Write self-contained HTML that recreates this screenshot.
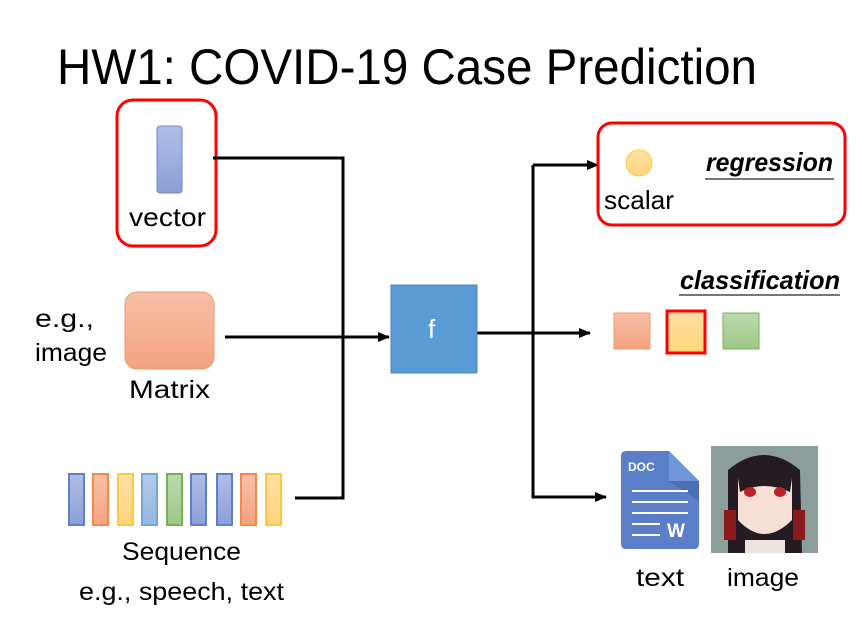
<!DOCTYPE html>
<html><head><meta charset="utf-8"><style>
html,body{margin:0;padding:0;background:#fff;width:866px;height:621px;overflow:hidden}
svg{display:block}
text{font-family:"Liberation Sans",sans-serif;fill:#000}
</style></head><body>
<svg width="866" height="621" viewBox="0 0 866 621" xmlns="http://www.w3.org/2000/svg">
<defs>
<linearGradient id="gb" x1="0" y1="0" x2="0" y2="1"><stop offset="0" stop-color="#b0bde6"/><stop offset="1" stop-color="#8b9fd8"/></linearGradient>
<linearGradient id="go" x1="0" y1="0" x2="0" y2="1"><stop offset="0" stop-color="#f6c0a8"/><stop offset="1" stop-color="#f4a280"/></linearGradient>
<linearGradient id="gy" x1="0" y1="0" x2="0" y2="1"><stop offset="0" stop-color="#ffe0a6"/><stop offset="1" stop-color="#ffd47a"/></linearGradient>
<linearGradient id="gl" x1="0" y1="0" x2="0" y2="1"><stop offset="0" stop-color="#b4cbea"/><stop offset="1" stop-color="#95b7e2"/></linearGradient>
<linearGradient id="gg" x1="0" y1="0" x2="0" y2="1"><stop offset="0" stop-color="#bcd9ae"/><stop offset="1" stop-color="#9cc886"/></linearGradient>
<marker id="ar" markerWidth="12" markerHeight="12" refX="11" refY="6" orient="auto" markerUnits="userSpaceOnUse"><path d="M0,1 L12,6 L0,11 z" fill="#000"/></marker>
</defs>
<text x="57" y="84" font-size="50" textLength="700" lengthAdjust="spacingAndGlyphs">HW1: COVID-19 Case Prediction</text>

<rect x="117" y="100" width="99" height="146" rx="16" fill="none" stroke="#f00" stroke-width="3"/>
<rect x="157" y="126" width="25" height="67" rx="3" fill="url(#gb)" stroke="#6f86cf" stroke-width="1"/>
<text x="129" y="226" font-size="26" textLength="77" lengthAdjust="spacingAndGlyphs">vector</text>

<rect x="125" y="292" width="89" height="77" rx="12" fill="url(#go)" stroke="#ee9a6c" stroke-width="1"/>
<text x="35" y="327" font-size="25" textLength="59" lengthAdjust="spacingAndGlyphs">e.g.,</text>
<text x="35" y="361" font-size="25" textLength="72" lengthAdjust="spacingAndGlyphs">image</text>
<text x="129" y="398" font-size="25" textLength="81" lengthAdjust="spacingAndGlyphs">Matrix</text>

<g stroke-width="2">
<rect x="69" y="474" width="15" height="51" fill="url(#gb)" stroke="#5f7fcc"/>
<rect x="93" y="474" width="15" height="51" fill="url(#go)" stroke="#f08a4e"/>
<rect x="118" y="474" width="15" height="51" fill="url(#gy)" stroke="#ffc73a"/>
<rect x="142" y="474" width="15" height="51" fill="url(#gl)" stroke="#74a4dc"/>
<rect x="167" y="474" width="15" height="51" fill="url(#gg)" stroke="#77b156"/>
<rect x="191" y="474" width="15" height="51" fill="url(#gb)" stroke="#5f7fcc"/>
<rect x="217" y="474" width="15" height="51" fill="url(#gb)" stroke="#5f7fcc"/>
<rect x="241" y="474" width="15" height="51" fill="url(#go)" stroke="#f08a4e"/>
<rect x="266" y="474" width="15" height="51" fill="url(#gy)" stroke="#ffc73a"/>
</g>
<text x="122" y="560" font-size="25" textLength="119" lengthAdjust="spacingAndGlyphs">Sequence</text>
<text x="79" y="600" font-size="25" textLength="205" lengthAdjust="spacingAndGlyphs">e.g., speech, text</text>

<g stroke="#000" stroke-width="3" fill="none">
<path d="M213,158 H343 V498 H295"/>
<path d="M225,337 H389" marker-end="url(#ar)"/>
<path d="M477,333 H590" marker-end="url(#ar)"/>
<path d="M533,165 V497 H606" marker-end="url(#ar)"/>
<path d="M533,165 H598" marker-end="url(#ar)"/>
</g>

<rect x="391" y="285" width="86" height="88" fill="#5b9bd5" stroke="#4a86bf" stroke-width="1"/>
<text x="428" y="338" font-size="26" style="fill:#fff">f</text>

<rect x="598" y="123" width="247" height="102" rx="14" fill="none" stroke="#f00" stroke-width="3"/>
<circle cx="639" cy="163" r="13" fill="url(#gy)" stroke="#ffc73a" stroke-width="1"/>
<text x="604" y="209" font-size="26" textLength="70" lengthAdjust="spacingAndGlyphs">scalar</text>
<text x="706" y="171" font-size="26" font-weight="bold" font-style="italic" textLength="127" lengthAdjust="spacingAndGlyphs">regression</text>
<line x1="705" y1="179" x2="834" y2="179" stroke="#777" stroke-width="2"/>

<text x="680" y="289" font-size="26" font-weight="bold" font-style="italic" textLength="160" lengthAdjust="spacingAndGlyphs">classification</text>
<line x1="679" y1="295" x2="840" y2="295" stroke="#777" stroke-width="2"/>
<rect x="614" y="313" width="36" height="36" fill="url(#go)" stroke="#ee9a6c" stroke-width="1"/>
<rect x="667" y="311" width="38" height="42" fill="url(#gy)" stroke="#f00" stroke-width="3"/>
<rect x="723" y="313" width="36" height="36" fill="url(#gg)" stroke="#77b156" stroke-width="1"/>

<path d="M624,451 H669 L699,481 V544 Q699,549 694,549 H626 Q621,549 621,544 V456 Q621,451 626,451 Z" fill="#5b7ec9"/>
<path d="M669,451 L699,481 H669 Z" fill="#6f97d9"/>
<path d="M669,481 H699 V501 Z" fill="#4d6db5"/>
<text x="628" y="471" font-size="12" font-weight="bold" style="fill:#fff">DOC</text>
<g stroke="#fff" stroke-width="2"><line x1="632" y1="491" x2="688" y2="491"/><line x1="632" y1="502" x2="688" y2="502"/><line x1="632" y1="513" x2="688" y2="513"/><line x1="632" y1="524" x2="660" y2="524"/><line x1="632" y1="535" x2="660" y2="535"/></g>
<text x="667" y="537" font-size="19" font-weight="bold" style="fill:#fff">W</text>
<text x="636" y="586" font-size="25" textLength="48" lengthAdjust="spacingAndGlyphs">text</text>

<rect x="711" y="446" width="107" height="107" fill="#9fb3b0"/>
<rect x="711" y="446" width="107" height="107" fill="#6e7f80" opacity="0.4"/>
<path d="M728,470 Q764,440 800,470 L802,553 H728 Z" fill="#241c22"/>
<path d="M738,478 Q764,468 792,478 L792,520 Q764,548 738,520 Z" fill="#f6e0d6"/>
<path d="M738,478 Q764,458 792,478 L790,492 Q764,480 740,492 Z" fill="#241c22"/>
<ellipse cx="750" cy="492" rx="6" ry="5" fill="#c0202a"/>
<ellipse cx="780" cy="492" rx="6" ry="5" fill="#c0202a"/>
<rect x="724" y="510" width="12" height="30" fill="#8a1a1c"/>
<rect x="793" y="510" width="12" height="30" fill="#8a1a1c"/>
<rect x="745" y="540" width="40" height="13" fill="#efe3e0"/>
<text x="727" y="586" font-size="25" textLength="72" lengthAdjust="spacingAndGlyphs">image</text>
</svg>
</body></html>
